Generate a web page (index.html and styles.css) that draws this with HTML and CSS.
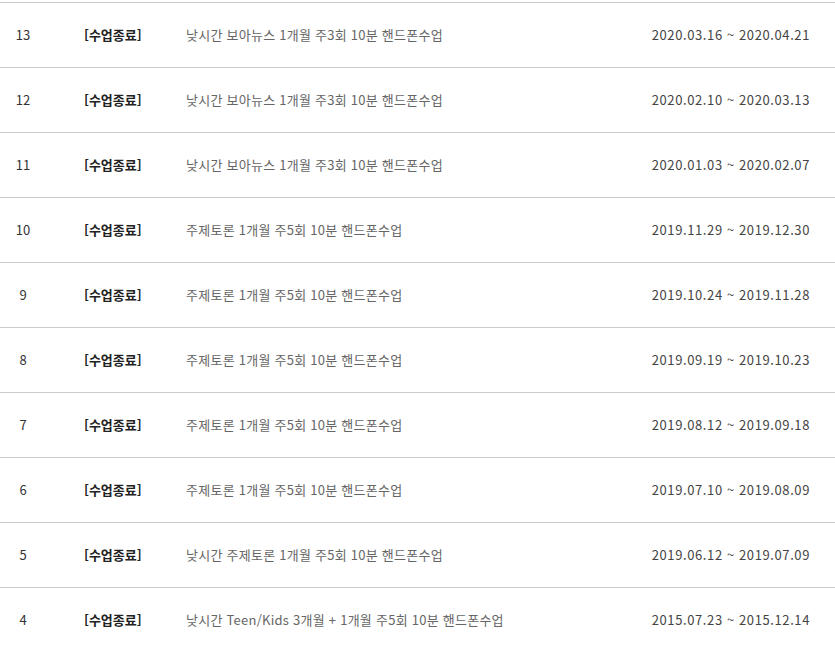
FILE: index.html
```html
<!DOCTYPE html>
<html lang="ko">
<head>
<meta charset="utf-8">
<link rel="stylesheet" href="styles.css">
</head>
<body>
<div class="list">
  <div class="row"><span class="num">13</span><span class="status">[수업종료]</span><span class="title">낮시간 보아뉴스 1개월 주3회 10분 핸드폰수업</span><span class="date">2020.03.16 ~ 2020.04.21</span></div>
  <div class="row"><span class="num">12</span><span class="status">[수업종료]</span><span class="title">낮시간 보아뉴스 1개월 주3회 10분 핸드폰수업</span><span class="date">2020.02.10 ~ 2020.03.13</span></div>
  <div class="row"><span class="num">11</span><span class="status">[수업종료]</span><span class="title">낮시간 보아뉴스 1개월 주3회 10분 핸드폰수업</span><span class="date">2020.01.03 ~ 2020.02.07</span></div>
  <div class="row"><span class="num">10</span><span class="status">[수업종료]</span><span class="title">주제토론 1개월 주5회 10분 핸드폰수업</span><span class="date">2019.11.29 ~ 2019.12.30</span></div>
  <div class="row"><span class="num">9</span><span class="status">[수업종료]</span><span class="title">주제토론 1개월 주5회 10분 핸드폰수업</span><span class="date">2019.10.24 ~ 2019.11.28</span></div>
  <div class="row"><span class="num">8</span><span class="status">[수업종료]</span><span class="title">주제토론 1개월 주5회 10분 핸드폰수업</span><span class="date">2019.09.19 ~ 2019.10.23</span></div>
  <div class="row"><span class="num">7</span><span class="status">[수업종료]</span><span class="title">주제토론 1개월 주5회 10분 핸드폰수업</span><span class="date">2019.08.12 ~ 2019.09.18</span></div>
  <div class="row"><span class="num">6</span><span class="status">[수업종료]</span><span class="title">주제토론 1개월 주5회 10분 핸드폰수업</span><span class="date">2019.07.10 ~ 2019.08.09</span></div>
  <div class="row"><span class="num">5</span><span class="status">[수업종료]</span><span class="title">낮시간 주제토론 1개월 주5회 10분 핸드폰수업</span><span class="date">2019.06.12 ~ 2019.07.09</span></div>
  <div class="row"><span class="num">4</span><span class="status">[수업종료]</span><span class="title">낮시간 Teen/Kids 3개월 + 1개월 주5회 10분 핸드폰수업</span><span class="date">2015.07.23 ~ 2015.12.14</span></div>
</div>
</body>
</html>
```
FILE: styles.css
```css
html, body {
  margin: 0;
  padding: 0;
  background: #fff;
}
body {
  font-family: "Noto Sans CJK KR", "Noto Sans", sans-serif;
  font-size: 13px;
  color: #333;
}
.list {
  margin-top: 2px;
  border-top: 1px solid #ccc;
}
.row {
  display: flex;
  align-items: center;
  height: 63px;
  padding-bottom: 1px;
  border-bottom: 1px solid #ccc;
}
.num {
  width: 46px;
  text-align: center;
  color: #333;
}
.status {
  width: 102px;
  margin-left: 38px;
  font-weight: bold;
  color: #222;
}
.title {
  flex: 1;
  color: #666;
  letter-spacing: 0.25px;
}
.date {
  margin-right: 25px;
  color: #444;
  letter-spacing: 0.6px;
}
```
